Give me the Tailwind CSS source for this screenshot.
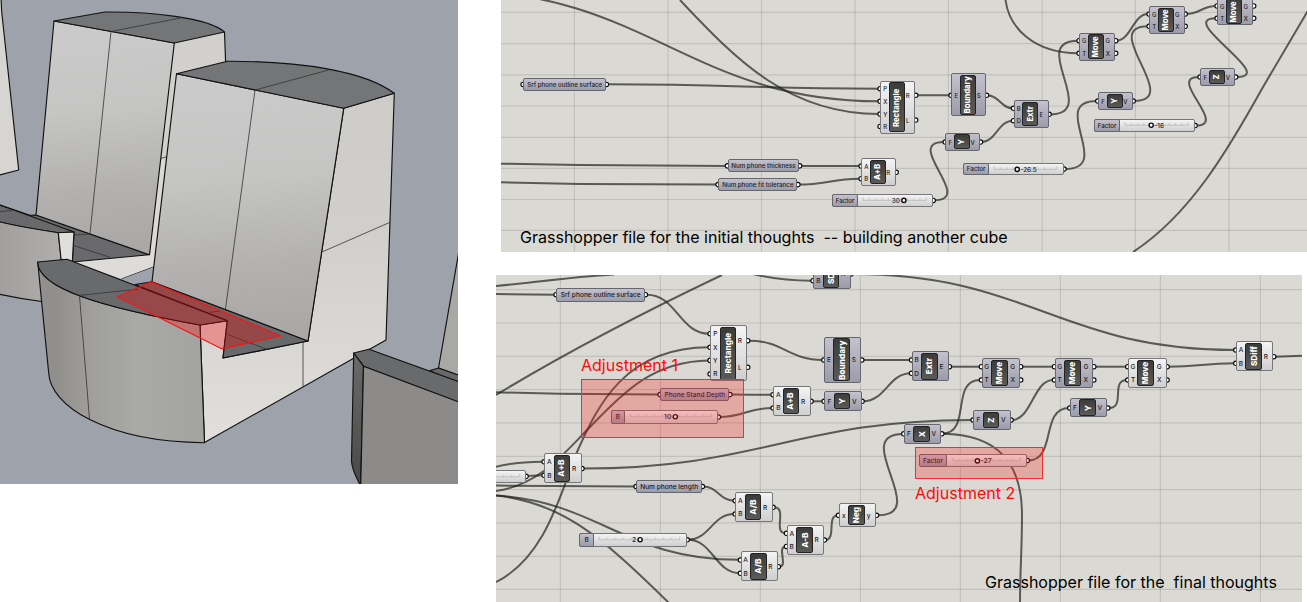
<!DOCTYPE html>
<html lang="en">
<head>
<meta charset="utf-8">
<title>Phone stand – Grasshopper iterations</title>
<script src="https://cdn.jsdelivr.net/npm/@tailwindcss/browser@4"></script>
</head>
<body class="bg-white font-['Inter',sans-serif] text-black">
<main class="flex h-[602px] w-[1307px] overflow-hidden bg-white">

  <figure class="h-[484px] w-[458px] shrink-0 overflow-hidden bg-[#9ea3ab]">
    <svg viewBox="0 0 458 484" class="block h-full w-full" fill="none" stroke="#111" stroke-width="1.15" stroke-linejoin="round">
      <defs>
        <linearGradient id="front" x1="0" y1="0" x2="0.05" y2="1"><stop offset="0" stop-color="#cbcbcb"/><stop offset=".4" stop-color="#c5c5c4"/><stop offset=".75" stop-color="#b2b1af"/><stop offset="1" stop-color="#a9a8a6"/></linearGradient>
        <linearGradient id="base" x1="0" y1="0" x2="1" y2="0"><stop offset="0" stop-color="#92918f"/><stop offset=".1" stop-color="#8f8e8b"/><stop offset=".32" stop-color="#a09f9c"/><stop offset=".6" stop-color="#a9a9a6"/><stop offset="1" stop-color="#a3a3a1"/></linearGradient>
        <linearGradient id="side" x1="0" y1="0" x2="0" y2="1"><stop offset="0" stop-color="#cdccc9"/><stop offset=".4" stop-color="#d0cfcc"/><stop offset="1" stop-color="#e0dfdc"/></linearGradient>
        <linearGradient id="dim" x1="0" y1="0" x2="0" y2="1"><stop offset="0" stop-color="#6b6a69"/><stop offset="1" stop-color="#484846"/></linearGradient>
        <linearGradient id="backbase" x1="0" y1="0" x2="1" y2="0"><stop offset="0" stop-color="#a09f9d"/><stop offset="1" stop-color="#b0afad"/></linearGradient>
      </defs>
      <path d="M-2-8H0.7L1.7 12 18.7 170-2 175.3Z" fill="#d6d5d1"/>

      <!-- rear stand -->
      <path d="M174.3 43 224.5 32 225.5 62 230 100 153 267.3 121.7 279 61 258 58.3 232.7 150 240Z" fill="#dddcd8" stroke="none"/>
      <path d="M174.3 43 224.5 32 225.5 62 176.5 74 160 240 150 250Z" fill="#d2d0cd" stroke="none"/>
      <path d="M153 160 165 160 156 250 149 254Z" fill="#dad9d5" stroke="none"/>
      <path d="M224.5 32 225.6 62"/>
      <path d="M-2 204.5 30 215.3 36 215 149 254.7 72.3 262 74 232 58.3 232.7Q20 227-2 221.5Z" fill="#69696b"/>
      <path d="M54 21 174.3 43 149.5 254.7 36 215Z" fill="url(#front)"/>
      <path d="M54 21 105 12C150 11.5 208 17.5 224.5 32L174.3 43Z" fill="#747577"/>
      <path d="M111 31.5 90 233.5M111 31.5 182 17.7M160.5 158.5 166 157M74 245.6 110 257.3M74 235 90 234M0 211.5 12 210.5" stroke="#333" stroke-width=".8"/>
      <path d="M-2 221.5Q20 227 58.3 232.7L61.5 262 45 302Q20 299-2 294Z" fill="url(#backbase)"/>
      <path d="M58.3 232.7 74 232 72.3 262 61 259Z" fill="#e0dfdc"/>
      <path d="M0 205 74 232M153 267.3 121.7 279"/>
      <path d="M121.7 279 153 267.3 152.3 282 135 284.5Z" fill="#9ea3ab" stroke="none"/>

      <!-- front stand -->
      <path d="M343.7 108.3 394.3 93.3 386 340 204.5 442.5 200 325 227.3 320.7 223 358 308 341Z" fill="url(#side)"/>
      <path d="M135 284.5 152 281.7 308 341 223 358 227.3 320.7Z" fill="#67696b"/>
      <path d="M176.5 73.7 343.7 108.3 308 341 152 281.7Z" fill="url(#front)"/>
      <path d="M176.5 73.7 227.5 61.3C300 61 365 71 394.3 93.3L343.7 108.3Z" fill="#747577"/>
      <path d="M37.7 262C38 288 100 307 200 325L204.5 442.7C105 442 50 405 48.7 373Z" fill="url(#base)"/>
      <path d="M37.7 262 67 259.3 227.3 320.7 200 325C100 307 38 288 37.7 262Z" fill="#696a6c"/>
      <path d="M255 90 225.5 309M255 90 328.7 70M322.7 251.7 390 222.3M303 343V386.5M80 295.3 138 289.3M79.5 296 89.5 419.3M210 312.3 220 311M227.3 334.3 266.7 349.3" stroke="#333" stroke-width=".8"/>
      <path d="M151 281.7 280.7 336 221.7 348.7 117.3 296.7Z" fill="#f00" fill-opacity=".31" stroke="#fa1414" stroke-width="1.2"/>

      <!-- right-hand stand -->
      <path d="M460 245 438.5 368 460 376Z" fill="#a9a8a5"/>
      <path d="M430 370.5 438.5 368 460 375.5V386Z" fill="#67686a"/>
      <path d="M353.7 353 369 349.2 460 382V402.5L363.5 366.2Z" fill="#696a6c"/>
      <path d="M353.7 353 363.5 366.2 360.7 486Q352 470 351.5 461Z" fill="url(#dim)"/>
      <path d="M363.5 366.2 460 402.5V486H360.7Z" fill="#8c8b89"/>
    </svg>
  </figure>

  <div class="flex grow flex-col gap-[23px] pl-[38px]">
    <section class="relative ml-[5px] h-[252px] w-[806px] overflow-hidden bg-[#dad9d3]" id="initial">
      <p class="absolute top-[225px] left-[19px] z-10 text-[16.03px] leading-6 whitespace-pre">Grasshopper file for the initial thoughts  -- building another cube</p>
    </section>
    <section class="relative h-[327px] w-[806px] overflow-hidden bg-[#dad9d3]" id="final">
      <div class="absolute top-[104px] left-[85px] z-10 h-[59px] w-[163px] border border-[#f03030] bg-[#f22]/27"></div>
      <div class="absolute top-[172px] left-[419px] z-10 h-[32px] w-[128px] border border-[#f03030] bg-[#f22]/27"></div>
      <p class="absolute top-[78px] left-[85px] z-20 text-[16.03px] leading-6 whitespace-pre text-[#ff0a0a]">Adjustment 1</p>
      <p class="absolute top-[206px] left-[419px] z-20 text-[16.03px] leading-6 whitespace-pre text-[#ff0a0a]">Adjustment 2</p>
      <p class="absolute top-[295px] left-[489px] z-10 text-[16.03px] leading-6 whitespace-pre">Grasshopper file for the  final thoughts</p>
    </section>
  </div>
</main>

<script>
const NS = 'http://www.w3.org/2000/svg';
const PALE = 'absolute box-border rounded-[2px] border border-[#77777a] bg-linear-to-b from-[#f4f4f4] to-[#cfcfd0]';
const LILAC = 'absolute box-border rounded-[2px] border border-[#66666e] bg-linear-to-b from-[#c3c2cd] to-[#9c9ba9]';
const CORE = 'absolute flex items-center justify-center rounded-[2px] border border-[#222] bg-linear-to-b from-[#3c3c3b] to-[#5a5a58] font-extrabold text-white';
const PORT = 'absolute flex h-2 w-2 items-center justify-center font-medium leading-none text-[#222]';

function board(id, ox, oy, w, h, cfg) {
  const host = document.getElementById(id);
  const svg = document.createElementNS(NS, 'svg');
  svg.setAttribute('viewBox', `${ox} ${oy} ${w} ${h}`);
  svg.setAttribute('class', 'absolute inset-0 block h-full w-full');
  let s = '<g fill="none" stroke="#000" stroke-opacity=".11" stroke-width="1.2">';
  cfg.vx.forEach(x => s += `<path d="M${x} ${oy}V${oy + h}"/>`);
  cfg.hy.forEach(y => s += `<path d="M${ox} ${y}H${ox + w}"/>`);
  s += '</g><g fill="none" stroke="#1c1c19" stroke-opacity=".68" stroke-width="2">';
  cfg.wires.forEach(v => {
    if (typeof v === 'string') { s += `<path d="${v}"/>`; return; }
    const [x1, y1, x2, y2, k = Math.abs(x2 - x1) * .47] = v;
    s += `<path d="M${x1} ${y1}C${x1 + k} ${y1} ${x2 - k} ${y2} ${x2} ${y2}"/>`;
  });
  s += '</g><g fill="#fff" stroke="#0c0c0c" stroke-width="1.15">';
  const grip = (x, y) => s += `<circle cx="${x}" cy="${y}" r="2.2"/>`;
  cfg.nodes.forEach(n => {
    n.ins.forEach(p => grip(n.x - .2, p[1]));
    n.outs.forEach(p => grip(n.x + n.w + .4, p[1]));
  });
  cfg.params.forEach(([x, y, x2, y2]) => { grip(x - .2, (y + y2) / 2); grip(x2 + .4, (y + y2) / 2); });
  cfg.sliders.forEach(q => grip(q.x + q.w + .4, q.y + q.h / 2));
  svg.innerHTML = s + '</g>';
  host.appendChild(svg);

  const box = (parent, cls, x, y, w, h, text) => {
    const d = document.createElement('div');
    d.className = cls;
    d.style.left = x + 'px'; d.style.top = y + 'px';
    if (w) d.style.width = w + 'px';
    if (h) d.style.height = h + 'px';
    if (text) d.textContent = text;
    parent.appendChild(d);
    return d;
  };
  cfg.nodes.forEach(n => {
    box(host, n.pale ? PALE : LILAC, n.x - ox, n.y - oy, n.w, n.h);
    const c = box(host, CORE, n.x - ox + cfg.coreX, n.y - oy + 1.3, cfg.coreW, n.h - 2.6);
    const t = document.createElement('span');
    t.className = '-rotate-90 leading-none whitespace-nowrap';
    t.style.fontSize = cfg.coreFont + 'px';
    t.textContent = n.t;
    c.appendChild(t);
    n.ins.forEach(p => box(host, PORT, n.x - ox + 1, p[1] - oy - 3.5, 0, 0, p[0]).style.fontSize = cfg.portFont + 'px');
    n.outs.forEach(p => box(host, PORT, n.x + n.w - ox - 11.5, p[1] - oy - 3.5, 0, 0, p[0]).style.fontSize = cfg.portFont + 'px');
  });
  cfg.params.forEach(([x, y, x2, y2, text]) => {
    const d = box(host, LILAC + ' flex items-center justify-center pt-px font-medium leading-none whitespace-nowrap text-[#1c1c1c]', x - ox, y - oy, x2 - x, y2 - y, text);
    d.style.fontSize = cfg.paramFont + 'px';
  });
  cfg.sliders.forEach(q => {
    box(host, PALE, q.x - ox, q.y - oy, q.w, q.h);
    if (q.name) {
      const d = box(host, LILAC + ' flex items-center justify-center pt-px font-medium leading-none text-[#1c1c1c]', q.x - ox, q.y - oy, q.nw, q.h, q.name);
      d.style.fontSize = cfg.paramFont + 'px';
    }
    const g = document.createElementNS(NS, 'svg');
    g.setAttribute('viewBox', `${q.x} ${q.y} ${q.w} ${q.h}`);
    g.setAttribute('class', 'absolute font-medium');
    g.style.cssText = `left:${q.x - ox}px;top:${q.y - oy}px;width:${q.w}px;height:${q.h}px`;
    const my = q.y + q.h / 2;
    let m = `<path d="M${q.a} ${my}H${q.b}`;
    for (let i = 0; i <= 10; i++) m += `M${q.a + (q.b - q.a) * i / 10} ${my - (i % 10 ? 2 : 3)}V${my}`;
    m += '" stroke="#b4b4b4" stroke-width=".7" fill="none"/>';
    if (q.v) {
      const right = q.v[0] === '-';
      m += `<text x="${right ? q.k + 3.2 : q.k - 4}" y="${my + 2.5}" font-size="${cfg.paramFont + .2}" text-anchor="${right ? 'start' : 'end'}" fill="#222">${q.v}</text>`;
      m += `<circle cx="${q.k}" cy="${my}" r="2.1" fill="#fff" stroke="#0c0c0c" stroke-width="1.4"/>`;
    }
    g.innerHTML = m;
    host.appendChild(g);
  });
}

board('initial', 501, 0, 806, 252, {
  coreX: 8.7, coreW: 16, coreFont: 7.7, portFont: 6, paramFont: 6.2,
  vx: [574.4, 668, 761.5, 855, 948.4, 1042.2, 1135.4, 1229],
  hy: [12.4, 43.6, 74.8, 106, 137.3, 168.4, 199.5, 230.4],
  wires: [
    [457, -9, 879, 101.3, 188], 'M680 0C738 62 790 114 879 114', [607, 84.2, 879, 88.7],
    'M501 163.7L580 165 727 165.9', 'M501 182.3L580 184 717 184.6',
    [800, 166, 860, 166], [798, 184.6, 860, 178.7],
    [934, 200.3, 944, 142, 42], [916, 95.3, 950, 95.3], [987, 95.3, 1013, 108.3], [981, 142, 1013, 120.7],
    [1050, 114.3, 1078, 40.7, 51], 'M1005.5 0C1009 28 1034 53 1078 53.3',
    [1116, 40.7, 1148, 14], [1186, 14, 1216, 6], [1134, 101, 1148, 26.3, 50],
    [1065, 169, 1097, 101, 50], [1196, 125.5, 1199, 77, 33], [1237, 77, 1216, 18.3, 41],
    'M1133 252C1190 215 1228 150 1263 87L1308 10.5'
  ],
  nodes: [
    { x: 880.3, y: 81, w: 35, h: 52.8, t: 'Rectangle', pale: 1, ins: [['P', 88.7], ['X', 101.3], ['Y', 114], ['R', 126.4]], outs: [['R', 95.3], ['L', 120]] },
    { x: 951.3, y: 73.3, w: 34.8, h: 43, t: 'Boundary', ins: [['E', 95.3]], outs: [['S', 95.3]] },
    { x: 945.4, y: 132.7, w: 34.7, h: 18, t: 'Y', ins: [['F', 142]], outs: [['V', 142]] },
    { x: 861.3, y: 158.3, w: 34.5, h: 27.4, t: 'A+B', pale: 1, ins: [['A', 166], ['B', 178.7]], outs: [['R', 172.3]] },
    { x: 1013.7, y: 100.3, w: 35, h: 27.4, t: 'Extr', ins: [['B', 108.3], ['D', 120.7]], outs: [['E', 114.3]] },
    { x: 1079.3, y: 33, w: 36, h: 27.7, t: 'Move', ins: [['G', 40.7], ['T', 53.3]], outs: [['G', 40.7], ['X', 53.3]] },
    { x: 1149.3, y: 6.3, w: 35.5, h: 27.4, t: 'Move', ins: [['G', 14], ['T', 26.3]], outs: [['G', 14], ['X', 26.3]] },
    { x: 1217.3, y: -2, w: 36, h: 27.4, t: 'Move', ins: [['G', 6], ['T', 18.3]], outs: [['G', 6], ['X', 18.3]] },
    { x: 1200.3, y: 68.3, w: 35, h: 17.4, t: 'Z', ins: [['F', 77]], outs: [['V', 77]] },
    { x: 1098, y: 92.3, w: 34.8, h: 17.4, t: 'Y', ins: [['F', 101]], outs: [['V', 101]] }
  ],
  params: [
    [523.3, 78, 606, 90.8, 'Srf phone outline surface'],
    [727.6, 159.3, 799.3, 172.4, 'Num phone thickness'],
    [718.3, 178.3, 797.5, 190.9, 'Num phone fit tolerance']
  ],
  sliders: [
    { x: 832.3, y: 194, w: 100.5, h: 12.8, nw: 25.5, name: 'Factor', a: 863.4, b: 926.6, k: 904.2, v: '30' },
    { x: 963.3, y: 162.7, w: 100.3, h: 12.8, nw: 25.5, name: 'Factor', a: 994.4, b: 1057.3, k: 1017.5, v: '-26.5' },
    { x: 1094.3, y: 119.3, w: 100.4, h: 12.5, nw: 25.5, name: 'Factor', a: 1125.4, b: 1188.4, k: 1151.5, v: '-16' }
  ]
});

const mid = [['G', 366.7], ['T', 380]], midOut = [['G', 366.7], ['X', 380]];
board('final', 496, 275, 806, 327, {
  coreX: 9.4, coreW: 16.6, coreFont: 8.2, portFont: 6.5, paramFont: 6.6,
  vx: [560.4, 660.4, 760.4, 860.4, 960.4, 1060.4, 1160.4, 1260.4],
  hy: [289.7, 323, 356.4, 389.7, 422.8, 456.4, 489.6, 522.9, 556.3, 589.4],
  wires: [
    'M496 286C530 283 570 277 614 274.5', 'M496 294L556 294.7', [647, 294.7, 709, 333.7],
    'M496 395C570 350 640 314 722 275',
    'M496 582C545 558 560 495 577 452C598 405 625 347.5 709 347.3',
    'M496 491C540 485 565 452 590 427C625 390 655 361 709 360.4',
    'M496 466.7Q515 461.8 543 461.7', 'M527 476L543 475.3', 'M496 485.6L635 486.6',
    'M496 495.5C600 502 625 560 740 559.8', 'M496 495.5C560 502 600 535 669 603',
    [703, 486.4, 734, 500.7], [688, 539.7, 734, 514], [688, 539.7, 740, 573.3],
    [774, 507.3, 786, 533.3, 14], [779, 566.7, 786, 546.4, 10], [825, 540, 838, 515.3, 12],
    [878, 515.3, 903, 434, 54], [583, 468.6, 972, 420, 175],
    'M496 392.3L560 393.8 659 394.5', [731, 394.6, 772, 394.7], [719, 417, 772, 408],
    [812, 401.3, 823, 401.3], [863, 401.3, 911, 373.3], [749, 340.7, 823, 360], [863, 360, 911, 360],
    [950, 366.7, 981, 366.7], [942, 433.7, 980, 380, 30],
    'M942 433.7C1000 434 1022 465 1022 515C1022 550 1020 570 1020 603',
    [1012, 420, 1053, 380], [1028, 460.4, 1069, 408, 29], [1109, 408, 1127, 380, 17],
    [1022, 366.7, 1054, 366.7], [1095, 366.7, 1127, 366.7], [1168, 366.7, 1235, 363.3],
    'M1275 356.7L1303 355.6', 'M745 272C770 279 790 280.7 812 280.7', 'M852 274C1030 274 1060 350 1235 350'
  ],
  nodes: [
    { x: 710.3, y: 325.4, w: 37, h: 56, t: 'Rectangle', pale: 1, ins: [['P', 333.7], ['X', 347.3], ['Y', 360.4], ['R', 374]], outs: [['R', 340.7], ['L', 367.3]] },
    { x: 773.3, y: 386.3, w: 37.4, h: 29.5, t: 'A+B', pale: 1, ins: [['A', 394.7], ['B', 408]], outs: [['R', 401.3]] },
    { x: 824.3, y: 391.3, w: 37.4, h: 19.4, t: 'Y', ins: [['F', 401.3]], outs: [['V', 401.3]] },
    { x: 824, y: 337, w: 37.4, h: 45.8, t: 'Boundary', ins: [['E', 360]], outs: [['S', 360]] },
    { x: 911.7, y: 351.3, w: 37.3, h: 30, t: 'Extr', ins: [['B', 360], ['D', 373.3]], outs: [['E', 366.7]] },
    { x: 981.6, y: 358.3, w: 38.7, h: 29.5, t: 'Move', ins: mid, outs: midOut },
    { x: 1054.7, y: 358.3, w: 38.7, h: 29.5, t: 'Move', ins: mid, outs: midOut },
    { x: 1128, y: 358.3, w: 38.7, h: 29.5, t: 'Move', pale: 1, ins: mid, outs: midOut },
    { x: 973.3, y: 410.3, w: 37.4, h: 19.4, t: 'Z', ins: [['F', 420]], outs: [['V', 420]] },
    { x: 904, y: 424.3, w: 37.4, h: 19.4, t: 'X', ins: [['F', 433.8]], outs: [['V', 433.8]] },
    { x: 1070, y: 398, w: 37.4, h: 19.4, t: 'Y', ins: [['F', 408]], outs: [['V', 408]] },
    { x: 813.3, y: 259.3, w: 37.4, h: 29.5, t: 'SDiff', ins: [['B', 280.7]], outs: [['R', 274]] },
    { x: 1236, y: 341.4, w: 37.3, h: 30, t: 'SDiff', pale: 1, ins: [['A', 350], ['B', 363.3]], outs: [['R', 356.7]] },
    { x: 544.3, y: 453.2, w: 37.3, h: 30, t: 'A+B', pale: 1, ins: [['A', 461.8], ['B', 475.3]], outs: [['R', 468.6]] },
    { x: 735.4, y: 492.3, w: 37.3, h: 29.5, t: 'A/B', pale: 1, ins: [['A', 500.7], ['B', 514]], outs: [['R', 507.3]] },
    { x: 740.6, y: 551.4, w: 37.3, h: 29.7, t: 'A/B', pale: 1, ins: [['A', 560], ['B', 573.3]], outs: [['R', 566.7]] },
    { x: 786.7, y: 525.3, w: 37.3, h: 29.5, t: 'A-B', pale: 1, ins: [['A', 533.3], ['B', 546.4]], outs: [['R', 540]] },
    { x: 838.7, y: 503.3, w: 37.4, h: 23.4, t: 'Neg', pale: 1, ins: [['x', 515.3]], outs: [['y', 515.3]] }
  ],
  params: [
    [556.3, 287.7, 645, 301.7, 'Srf phone outline surface'],
    [660.3, 387.7, 729.5, 401.5, 'Phone Stand Depth'],
    [636.3, 479.6, 702, 493.4, 'Num phone length']
  ],
  sliders: [
    { x: 611, y: 410.3, w: 107, h: 13.5, nw: 14, name: 'B', a: 630.4, b: 711.3, k: 675.3, v: '10' },
    { x: 579.3, y: 533, w: 107.5, h: 13.5, nw: 14.5, name: 'B', a: 599.4, b: 680, k: 640.4, v: '2' },
    { x: 919, y: 453.6, w: 108, h: 13.8, nw: 28, name: 'Factor', a: 953, b: 1020, k: 977.4, v: '-27' },
    { x: 418, y: 469.6, w: 107.7, h: 13.5, nw: 0, name: '', a: 439, b: 519.7, k: 460, v: '' }
  ]
});
</script>
</body>
</html>
